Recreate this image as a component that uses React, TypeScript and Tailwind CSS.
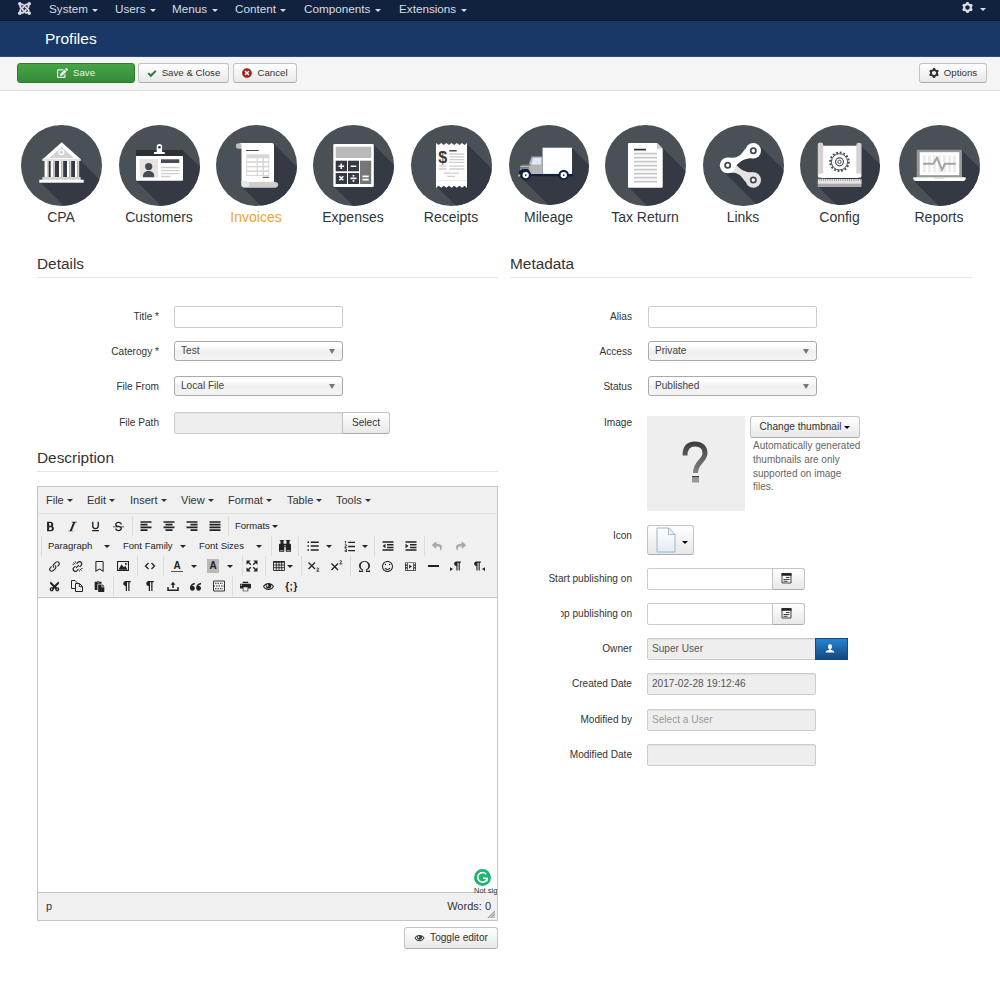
import React from 'react';
import {
  ImBinoculars, ImBold, ImCheckmark, ImCog, ImEye, ImFilm, ImItalic, ImJoomla, ImLink, ImListNumbered,
  ImOmega, ImPilcrow, ImPrinter, ImQuotesLeft, ImSmile, ImStrikethrough, ImUnderline, ImUser,
} from 'react-icons/im';
import { FaPaste, FaEdit, FaTimesCircle, FaRegBookmark, FaShare, FaReply, FaCut } from 'react-icons/fa';

type Kids = { children?: React.ReactNode };

function Caret({ className = '' }: { className?: string }) {
  return (
    <svg viewBox="0 0 6 3" className={`h-[3px] w-[6px] shrink-0 fill-current ${className}`}>
      <path d="M0 0h6L3 3z" />
    </svg>
  );
}

const NAV = [
  { label: 'System', w: 'w-[66px]' },
  { label: 'Users', w: 'w-[57px]' },
  { label: 'Menus', w: 'w-[63px]' },
  { label: 'Content', w: 'w-[69px]' },
  { label: 'Components', w: 'w-[95px]' },
  { label: 'Extensions', w: 'w-[80px]' },
];

function NavBar() {
  return (
    <header className="flex h-[21px] items-start border-b border-[#0b1a31] bg-[#10223e] text-[#d9dde3]">
      <ImJoomla className="mt-[2px] ml-[17.500px] h-[13px] w-[13px]" />
      <nav className="ml-[18.500px] flex text-[11.7px] leading-[17px]">
        {NAV.map((n) => (
          <span key={n.label} className={`flex items-center ${n.w}`}>
            {n.label}
            <Caret className="mt-[3px] ml-[4.500px]" />
          </span>
        ))}
      </nav>
      <span className="mt-[2px] mr-[14px] ml-auto flex items-center">
        <ImCog className="h-[11px] w-[11px]" />
        <Caret className="mt-[3px] ml-[7px]" />
      </span>
    </header>
  );
}

function Btn({ className = '', children }: Kids & { className?: string }) {
  return (
    <button
      className={`flex shrink-0 items-center justify-center rounded-[3px] border border-[#c3c3c3] border-b-[#adadad] bg-linear-to-b from-white to-[#e8e8e8] whitespace-nowrap text-[#333] ${className}`}
    >
      {children}
    </button>
  );
}

function ActionBar() {
  return (
    <div className="flex h-[34px] items-start border-b border-[#e1e1e1] bg-[#f5f5f5] pt-[6px] text-[9.7px]">
      <button className="ml-[17px] flex h-[20px] w-[118px] items-center justify-center rounded-[3px] border border-[#2f7d33] bg-linear-to-b from-[#46a546] to-[#368a38] text-[#e6f3e6]">
        <FaEdit className="mr-[5px] h-[10px] w-[11px]" />
        Save
      </button>
      <Btn className="ml-[3px] h-[20px] w-[91px]">
        <ImCheckmark className="mr-[5px] h-[9px] w-[10px] text-[#2d7d31]" />
        Save &amp; Close
      </Btn>
      <Btn className="ml-[4px] h-[20px] w-[64px]">
        <FaTimesCircle className="mr-[5px] h-[10px] w-[10px] text-[#a51f18]" />
        Cancel
      </Btn>
      <Btn className="mr-[13px] ml-auto h-[20px] w-[68px]">
        <ImCog className="mr-[5px] h-[10px] w-[10px]" />
        Options
      </Btn>
    </div>
  );
}

/* ---------- round section icons, each on an 81-unit canvas ---------- */

function Shadow({ a, b }: { a: [number, number]; b: [number, number] }) {
  return (
    <polygon
      fill="#343943"
      points={`${a[0]},${a[1]} ${a[0] + 60},${a[1] + 60} ${b[0] + 60},${b[1] + 60} ${b[0]},${b[1]}`}
    />
  );
}

const cpa = (
  <>
    <Shadow a={[59, 35]} b={[19, 57]} />
    <rect x="23" y="35" width="35" height="18" fill="#343943" />
    <path d="M40.7 17.3 60 34.5H21.3z" fill="#fff" />
    <path d="M40.7 22 53 33H28.500z" fill="#d3d1d2" />
    <circle cx="40.4" cy="27.300" r="2.400" fill="#d3d1d2" stroke="#fff" strokeWidth="1.200" />
    <rect x="21.300" y="33.800" width="38.400" height="2.200" fill="#e3e1e2" />
    {[23.5, 29.7, 38, 46, 54].map((x) => (
      <g key={x}>
        <rect x={x} y="36" width="2.500" height="16" fill="#fff" />
        <rect x={x + 2.5} y="36" width="1.700" height="16" fill="#d3d1d2" />
      </g>
    ))}
    <rect x="21.300" y="52" width="38.400" height="3" fill="#d3d1d2" />
    <rect x="18.300" y="54.700" width="44.400" height="3" fill="#fff" />
  </>
);

const customers = (
  <>
    <Shadow a={[64, 25]} b={[17, 55.7]} />
    <rect x="17" y="25" width="47" height="6.500" fill="#2c3135" />
    <path d="M37.700 27v-5.300a2.700 2.700 0 0 1 5.400 0V27h2.600v2H35v-2z" fill="#fff" />
    <circle cx="40.400" cy="22.300" r="1.300" fill="#343943" />
    <rect x="17" y="31" width="47" height="24.700" rx="0.800" fill="#fff" />
    <rect x="20.700" y="34" width="18.300" height="18.300" fill="#e6e3e4" />
    <circle cx="29.700" cy="41.600" r="3.600" fill="#444b55" />
    <path d="M24 52.300v-1.500c0-3 2.500-4.800 5.700-4.800s5.500 1.800 5.500 4.800v1.500z" fill="#444b55" />
    <rect x="42" y="34.300" width="18.300" height="3.700" fill="#444b55" />
    <path d="M42 42.500h18.300M42 45.700h18.300M42 48.700h18.300M42 51.500h9.500" stroke="#cfcdce" strokeWidth="1.300" />
  </>
);

const invoices = (
  <>
    <Shadow a={[57, 18]} b={[26, 62]} />
    <path d="M27 18.300h-4.500a2.700 2.700 0 0 0 0 5.400H27z" fill="#bfbdbe" />
    <path d="M24 18H56a2 2 0 0 1 2 2v38H25.500V20z" fill="#fff" />
    <path d="M30 25.500h12.700M46.700 52.300h6.500" stroke="#444b55" strokeWidth="1" />
    <rect x="30.300" y="29.300" width="23" height="21.700" fill="#d8d6d7" />
    {[33.2, 37.8, 42.4, 47].map((y) => (
      <g key={y} fill="#fff">
        <rect x="31.200" y={y} width="9.500" height="3" />
        <rect x="42" y={y} width="4.500" height="3" />
        <rect x="48" y={y} width="4.300" height="3" />
      </g>
    ))}
    <path d="M27 57h33a2.900 2.900 0 0 1-1 5.700H28a2.900 2.900 0 0 1-2.600-3V56z" fill="#d0cecf" />
    <path d="M25.500 56h5a3 3 0 0 1-.5 6h-2a2.700 2.700 0 0 1-2.500-3z" fill="#e9e8e8" />
  </>
);

const expenses = (
  <>
    <Shadow a={[60.5, 19.5]} b={[21, 61.5]} />
    <rect x="20.300" y="19" width="40.500" height="43" rx="1.300" fill="#fff" />
    <rect x="22.700" y="21.700" width="35.600" height="11.300" fill="#b9b9b9" />
    <g fill="#343943">
      <rect x="22.700" y="35.700" width="11.300" height="10.600" />
      <rect x="35" y="35.700" width="11" height="10.600" />
      <rect x="22.700" y="48" width="11.300" height="11" />
      <rect x="35" y="48" width="11" height="11" />
    </g>
    <rect x="47" y="35.700" width="11.200" height="23.300" fill="#767676" />
    <path
      d="M25.500 41.200h5.600M28.300 38.400V44M37.700 41.200h5.600M26.300 51.300l4 4M30.300 51.300l-4 4M37.500 53.400h6M49.500 51.400h6.200M49.500 54.600h6.200"
      stroke="#fff"
      strokeWidth="1.600"
    />
    <circle cx="40.500" cy="50.700" r="1" fill="#fff" />
    <circle cx="40.500" cy="56.100" r="1" fill="#fff" />
  </>
);

const receipts = (
  <>
    <Shadow a={[56, 19]} b={[25, 61]} />
    <path
      d="M25 18l2.600 2 2.600-2 2.600 2 2.600-2 2.600 2 2.600-2 2.600 2 2.600-2 2.600 2 2.600-2 2.600 2L56 18v45l-2.400-2.200-2.600 2-2.600-2-2.600 2-2.600-2-2.600 2-2.600-2-2.600 2-2.600-2-2.600 2-2.600-2L25 63z"
      fill="#fff"
    />
    <text x="31.800" y="38" textAnchor="middle" fontFamily="Liberation Sans" fontSize="16" fontWeight="bold" fill="#343943">$</text>
    <path d="M38.300 25.700h7.400" stroke="#444b55" strokeWidth="1.600" />
    <path
      d="M38.300 29h15M38.300 31.800h15M38.300 34.600h15M38.300 37.400h15M38.300 41.200h15M38.300 44h15M28 41.200h7.500M28 44h7.500M32.700 48.200h15.500M36.500 51.300h7.500"
      stroke="#cfcdce"
      strokeWidth="1.300"
    />
    <path d="M26 55.500h30" stroke="#d5d5d5" strokeWidth="0.800" strokeDasharray="1.500 1" />
  </>
);

const mileage = (
  <>
    <Shadow a={[63.5, 23]} b={[12, 53]} />
    <rect x="34" y="23" width="29.800" height="26.500" fill="#fff" />
    <path d="M23 32h9.500l1.500 1v17H12l-1-4 .5-5 2-1h6.500z" fill="#b4b3b5" />
    <path d="M24.500 33.500h8V40h-10z" fill="#dfe8f6" />
    <path d="M11 43.500h9M12 40.500h9.500" stroke="#343943" strokeWidth="0.800" />
    <path d="M10 46.500l3.500-2 6 0 3 5H65V52H21l-9 1.500-2-2z" fill="#10223e" />
    <path d="M9.500 50h2v2.200h-2z" fill="#e5cf2c" />
    {[16.9, 55.4].map((x) => (
      <g key={x}>
        <circle cx={x} cy="50.700" r="5.300" fill="#10223e" />
        <circle cx={x} cy="50.700" r="3.200" fill="#fff" />
        <circle cx={x} cy="50.700" r="0.900" fill="#10223e" />
      </g>
    ))}
  </>
);

const taxReturn = (
  <>
    <Shadow a={[57.5, 23]} b={[24, 62.5]} />
    <path d="M24 18h28l5.700 5.700v38a1 1 0 0 1-1 1H24a1 1 0 0 1-1-1V19a1 1 0 0 1 1-1z" fill="#fff" />
    <path d="M52 18l5.700 5.700H52z" fill="#cfcdce" />
    <path d="M29 24.700h12" stroke="#343943" strokeWidth="1.800" />
    <path
      d="M29 28.700h23M29 32.700h23M29 36.700h23M29 40.700h23M29 44.700h23M29 48.700h23M29 52.700h23M29 56.700h23"
      stroke="#c9c7c8"
      strokeWidth="1.700"
    />
  </>
);

const links = (
  <>
    <Shadow a={[56, 20]} b={[19, 45]} />
    <path d="M26 48c8-1 11 1 16.500 9l8-9.700c-8 .2-12-1.500-18-8z" fill="#e6e3e4" />
    <path d="M26 32.500c8 1 11-1 16.500-9l8 9.700c-8-.2-12 1.500-18 8z" fill="#fff" />
    <circle cx="50.300" cy="55" r="7.700" fill="#e6e3e4" />
    <circle cx="50.300" cy="25.700" r="7.700" fill="#fff" />
    <circle cx="24.700" cy="40.300" r="7.900" fill="#fff" />
    {[[50.3, 55], [50.3, 25.7], [24.7, 40.3]].map(([x, y]) => (
      <circle key={y} cx={x} cy={y} r="2.600" fill="#fff" stroke="#444b55" strokeWidth="1.800" />
    ))}
  </>
);

const config = (
  <>
    <Shadow a={[62, 21]} b={[18, 62]} />
    <rect x="22" y="21" width="37" height="32.500" fill="#fff" />
    <path d="M18 20a2.500 2 0 0 1 5.500 0v30h-5.500zM57 20a2.500 2 0 0 1 5.300 0v30H57z" fill="#d3d1d2" />
    <rect x="18" y="49" width="44.300" height="4.500" rx="2.200" fill="#fff" />
    <rect x="18" y="54.700" width="44.300" height="5" fill="#e6e3e4" />
    <path d="M19 55.700h42.500" stroke="#8b8b8b" strokeWidth="1.800" strokeDasharray="0.700 1.500" />
    <rect x="18" y="59.500" width="44.300" height="3.300" fill="#a9a7a8" />
    <circle cx="40" cy="37.300" r="9.400" fill="none" stroke="#444b55" strokeWidth="2" strokeDasharray="1.850 1.840" />
    <circle cx="40" cy="37.300" r="8.200" fill="#fff" stroke="#444b55" strokeWidth="1" />
    <circle cx="40" cy="37.300" r="4" fill="none" stroke="#444b55" strokeWidth="1.200" />
    <circle cx="40" cy="37.300" r="1.700" fill="none" stroke="#444b55" strokeWidth="1" />
  </>
);

const reports = (
  <>
    <Shadow a={[62.5, 25]} b={[15, 56]} />
    <rect x="17.700" y="24.700" width="45.300" height="28" rx="1.300" fill="#979797" />
    <rect x="20.700" y="27.200" width="39.600" height="23" fill="#fff" />
    <path d="M25.500 30.500v17M30.500 30.500v17M35.500 30.500v17M40.500 30.500v17M45.500 30.500v17M50.500 30.500v17M55.500 30.500v17" stroke="#ececec" strokeWidth="2.800" />
    <path d="M24 38.800h10.500l3.500-6 5 12 3-6h10.700" fill="none" stroke="#a3a3a3" strokeWidth="2" />
    <path d="M14.300 52.300h52.400v1.200c0 1.500-1 2.500-2.500 2.500H16.800c-1.500 0-2.500-1-2.500-2.500z" fill="#fff" />
    <rect x="35.500" y="52.300" width="10" height="1.300" fill="#cfcdce" />
  </>
);

const SECTIONS = [
  { label: 'CPA', art: cpa, box: 'ml-[21px] w-[81px]' },
  { label: 'Customers', art: customers, box: 'ml-[17px] w-[81px]' },
  { label: 'Invoices', art: invoices, box: 'ml-[16px] w-[81px]', active: true },
  { label: 'Expenses', art: expenses, box: 'ml-[16px] w-[81px]' },
  { label: 'Receipts', art: receipts, box: 'ml-[17px] w-[81px]' },
  { label: 'Mileage', art: mileage, box: 'ml-[17px] w-[80px]' },
  { label: 'Tax Return', art: taxReturn, box: 'ml-[16px] w-[81px]' },
  { label: 'Links', art: links, box: 'ml-[17px] w-[81px]' },
  { label: 'Config', art: config, box: 'ml-[16px] w-[80px]' },
  { label: 'Reports', art: reports, box: 'ml-[19px] w-[81px]' },
];

function SectionIcons() {
  return (
    <div className="flex h-[163px] pt-[34px]">
      {SECTIONS.map((s) => (
        <a key={s.label} className={`flex shrink-0 flex-col items-center ${s.box}`}>
          <span className="h-[81px] w-full">
            <svg viewBox="0 0 81 81" className="aspect-square w-full rounded-full bg-[#495157]">
              {s.art}
            </svg>
          </span>
          <span
            className={`-mt-px mr-px flex h-[24px] items-center text-[14px] whitespace-nowrap ${s.active ? 'text-[#f5a32c]' : 'text-[#30343c]'}`}
          >
            {s.label}
          </span>
        </a>
      ))}
    </div>
  );
}

/* ---------- form pieces ---------- */

function Heading({ children }: Kids) {
  return <h2 className="h-[24px] border-b border-[#e5e5e5] text-[15.4px] leading-[20px] text-[#333]">{children}</h2>;
}

type RowProps = Kids & { label: string; className?: string; clip?: string; gap?: string };

function Row({ label, className = '', clip = '', gap = 'ml-[16px]', children }: RowProps) {
  return (
    <div className={`flex items-start ${className}`}>
      <div className="flex h-[21px] w-[122px] shrink-0 items-center justify-end">
        <span className={`flex justify-end whitespace-nowrap ${clip}`}>{label}</span>
      </div>
      <div className={`flex h-full ${gap}`}>{children}</div>
    </div>
  );
}

function Field({ className = '', children }: Kids & { className?: string }) {
  return <div className={`flex items-center border border-[#ccc] pl-[4px] ${className}`}>{children}</div>;
}

const textBox = 'h-full w-[169px] rounded-[2px] bg-white';
const lockedBox = 'h-full w-[169px] rounded-[2px] bg-[#eee] text-[#555] shadow-[inset_0_1px_1px_#e2e2e2]';

function Select({ value }: { value: string }) {
  return (
    <div className="flex h-[20px] w-[169px] items-center justify-between rounded-[3px] border border-[#aaa] bg-linear-to-b from-white from-20% via-[#f0f0f0] via-50% to-[#f4f4f4] pr-[7px] pl-[6px] text-[#444]">
      {value}
      <svg viewBox="0 0 6 5" className="h-[5px] w-[6px] fill-[#777]">
        <path d="M0 0h6L3 5z" />
      </svg>
    </div>
  );
}

/* ---------- editor ---------- */

const MENUS = [
  { label: 'File', w: 'w-[41px]' },
  { label: 'Edit', w: 'w-[43px]' },
  { label: 'Insert', w: 'w-[51px]' },
  { label: 'View', w: 'w-[47px]' },
  { label: 'Format', w: 'w-[59px]' },
  { label: 'Table', w: 'w-[49px]' },
  { label: 'Tools', w: 'w-[45px]' },
];

const ALIGN_PATHS = [
  'M.5 2h11M.5 4.700h7M.5 7.400h11M.5 10.100h7',
  'M.5 2h11M2.500 4.700h7M.5 7.400h11M2.500 10.100h7',
  'M.5 2h11M4.500 4.700h7M.5 7.400h11M4.500 10.100h7',
  'M.5 2h11M.5 4.700h11M.5 7.400h11M.5 10.100h11',
];

function Cell({ w = 'w-[23px]', children }: Kids & { w?: string }) {
  return <span className={`flex h-full shrink-0 items-center justify-center ${w}`}>{children}</span>;
}

function Sep({ className = '' }: { className?: string }) {
  return (
    <span className={`flex h-full w-[4px] shrink-0 justify-center ${className}`}>
      <span className="h-full w-px bg-[#dcdcdc]" />
    </span>
  );
}

function Drop({ w, label }: { w: string; label: string }) {
  return (
    <span className={`flex h-full shrink-0 items-center justify-between whitespace-nowrap ${w}`}>
      {label}
      <Caret />
    </span>
  );
}

function Glyph({ className = 'h-[12px] w-[12px]', children }: Kids & { className?: string }) {
  return (
    <svg viewBox="0 0 12 12" className={className} fill="none" stroke="currentColor">
      {children}
    </svg>
  );
}

function Editor() {
  const i = 'h-[12px] w-[12px]';
  const s = 'h-[11px] w-[11px]';
  return (
    <div className="relative mt-[13px] flex h-[435px] w-[461px] flex-col border border-[#c5c5c5] bg-[#f0f0f0] text-[#333]">
      <div className="flex h-[27px] items-center border-b border-[#e2e2e2] pl-[8px] text-[11px]">
        {MENUS.map((m) => (
          <span key={m.label} className={`flex items-center ${m.w}`}>
            {m.label}
            <Caret className="ml-[3px]" />
          </span>
        ))}
      </div>
      <div className="flex h-[84px] flex-col border-b border-[#c5c5c5] pt-[2px] text-[9.500px] text-[#222]">
        <div className="flex h-[20px] items-center pl-px">
          <Cell w="w-[22px]"><ImBold className={s} /></Cell>
          <Cell><ImItalic className={s} /></Cell>
          <Cell><ImUnderline className={s} /></Cell>
          <Cell><ImStrikethrough className={s} /></Cell>
          <Sep />
          {ALIGN_PATHS.map((d) => (
            <Cell key={d}>
              <Glyph><path strokeWidth="1.700" d={d} /></Glyph>
            </Cell>
          ))}
          <Sep />
          <Drop w="ml-[5px] w-[43px]" label="Formats" />
        </div>
        <div className="flex h-[20px] items-center pl-px">
          <Sep />
          <Drop w="w-[72px] pr-[5px] pl-[5px]" label="Paragraph" />
          <Drop w="w-[76px] pr-[5px] pl-[8px]" label="Font Family" />
          <Drop w="w-[78px] pr-[7px] pl-[8px]" label="Font Sizes" />
          <Sep />
          <Cell><ImBinoculars className={i} /></Cell>
          <Sep />
          <Cell w="w-[26px]">
            <Glyph><path strokeWidth="1.500" d="M.5 2.300H2M3.700 2.300h8M.5 6.100H2M3.700 6.100h8M.5 9.900H2M3.700 9.900h8" /></Glyph>
          </Cell>
          <Caret className="mr-[4px]" />
          <Cell w="w-[26px]"><ImListNumbered className={s} /></Cell>
          <Caret className="mr-[4px]" />
          <Sep />
          <Cell>
            <Glyph>
              <path strokeWidth="1.500" d="M.5 2h11M5 4.700h6.500M5 7.400h6.500M.5 10.100h11" />
              <path stroke="none" fill="currentColor" d="M3.500 3.800v4.400L.5 6z" />
            </Glyph>
          </Cell>
          <Cell>
            <Glyph>
              <path strokeWidth="1.500" d="M.5 2h11M5 4.700h6.500M5 7.400h6.500M.5 10.100h11" />
              <path stroke="none" fill="currentColor" d="M.5 3.800v4.400l3-2.200z" />
            </Glyph>
          </Cell>
          <Sep className="-mr-px" />
          <Cell w="w-[24px]"><FaReply className="h-[10px] w-[10px] text-[#a9a9a9]" /></Cell>
          <Cell><FaShare className="h-[10px] w-[10px] text-[#a9a9a9]" /></Cell>
        </div>
        <div className="flex h-[20px] items-center pl-[4px]">
          <Cell w="w-[24px]"><ImLink className={s} /></Cell>
          <Cell w="w-[22px]">
            <Glyph className={s}>
              <g transform="rotate(90 6 6)">
                <path strokeWidth="1.300" d="M5 3l1.500-1.600a2.300 2.300 0 0 1 3.500 3.300L8.300 6.500M7 9l-1.500 1.600A2.300 2.300 0 0 1 2 7.300l1.700-1.800M4.500 7.500l3-3" transform="rotate(-90 6 6)" />
              </g>
              <path strokeWidth="1" d="M1.500 1.500l2 2M8.500 8.500l2 2M3.700.5V2M.5 3.700H2M8.300 10v1.500M10 8.300h1.500" />
            </Glyph>
          </Cell>
          <Cell><FaRegBookmark className="h-[11px] w-[9px]" /></Cell>
          <Cell>
            <Glyph>
              <path strokeWidth="1.100" d="M.5 1.500h11v9H.5z" />
              <path stroke="none" fill="currentColor" d="M1.500 9.700l3-5.500 2.300 3 1.500-1.500 2.200 4zM8 3h1.800v1.800H8z" />
            </Glyph>
          </Cell>
          <Sep className="ml-px" />
          <Cell w="w-[22px]">
            <Glyph><path strokeWidth="1.300" d="M4.500 3L1.500 6l3 3M7.500 3l3 3-3 3" /></Glyph>
          </Cell>
          <Sep />
          <Cell w="w-[24px]">
            <span className="h-[12px] w-[12px] border-b border-[#555] text-center text-[10px] leading-[11px] font-bold">A</span>
          </Cell>
          <Caret className="mx-[2px]" />
          <Cell w="w-[28px]">
            <span className="h-[14px] w-[12px] bg-[#b9b9b9] text-center text-[10px] leading-[14px] font-bold">A</span>
          </Cell>
          <Caret />
          <Sep className="ml-[7px]" />
          <Cell w="w-[16px]">
            <Glyph>
              <path strokeWidth="1.400" d="M1.500 1.500l3.300 3.300M10.500 1.500L7.200 4.800M1.500 10.500l3.300-3.300M10.500 10.500L7.200 7.200" />
              <path stroke="none" fill="currentColor" d="M.5.500h4.200L.5 4.700zM11.500.500v4.200L7.300.500zM.5 11.500V7.300l4.200 4.200zM11.500 11.500H7.300l4.200-4.200z" />
            </Glyph>
          </Cell>
          <Sep className="ml-[3px]" />
          <Cell w="ml-[4px] w-[16px]">
            <Glyph>
              <path strokeWidth="0.900" d="M.5 1.500h11v9H.5zM.5 5h11M.5 7.700h11M3.300 2v8.500M6 2v8.500M8.700 2v8.500" />
              <path strokeWidth="1.500" d="M.5 2h11" />
            </Glyph>
          </Cell>
          <Caret />
          <Sep className="ml-[6px]" />
          <Cell w="w-[22px]">
            <Glyph>
              <path strokeWidth="1.300" d="M.5 2.500l6.500 6.500M7 2.500L.5 9" />
              <path strokeWidth="0.900" d="M8.700 8.300l1.400-.4.500.900L8.700 11.200h2.600" />
            </Glyph>
          </Cell>
          <Cell>
            <Glyph>
              <path strokeWidth="1.300" d="M.5 3.500L7 10M7 3.500L.5 10" />
              <path strokeWidth="0.900" d="M8.700 1l1.400-.4.500.900L8.700 3.900h2.600" />
            </Glyph>
          </Cell>
          <Sep />
          <Cell w="w-[24px]"><ImOmega className={s} /></Cell>
          <Cell><ImSmile className={s} /></Cell>
          <Cell><ImFilm className={s} /></Cell>
          <Cell><span className="h-[1.500px] w-[11px] bg-[#222]" /></Cell>
          <Cell w="w-[22px]">
            <svg viewBox="0 0 4 5" className="mt-[5px] h-[4px] w-[3px] fill-current"><path d="M0 0v5l4-2.500z" /></svg>
            <ImPilcrow className="h-[10px] w-[9px]" />
          </Cell>
          <Cell>
            <ImPilcrow className="h-[10px] w-[9px]" />
            <svg viewBox="0 0 4 5" className="mt-[5px] h-[4px] w-[3px] fill-current"><path d="M4 0v5L0 2.500z" /></svg>
          </Cell>
        </div>
        <div className="flex h-[20px] items-center pl-[4px]">
          <Cell w="w-[24px]"><FaCut className="h-[11px] w-[11px] -rotate-90" /></Cell>
          <Cell w="w-[22px]">
            <Glyph>
              <path strokeWidth="1" d="M4.500 8.500H.5v-8H4L6 2.500V4M4.500 3.500h4l3 3v5h-7zM8.300 3.700v3h3" />
            </Glyph>
          </Cell>
          <Cell><FaPaste className={s} /></Cell>
          <Sep />
          <Cell><ImPilcrow className="h-[10px] w-[10px]" /></Cell>
          <Cell><ImPilcrow className="h-[10px] w-[10px]" /></Cell>
          <Cell>
            <Glyph>
              <path strokeWidth="1.500" d="M1 7v3.300h10V7M6 8V4" />
              <path stroke="none" fill="currentColor" d="M3.500 4.800L6 1.800l2.500 3z" />
            </Glyph>
          </Cell>
          <Cell><ImQuotesLeft className={s} /></Cell>
          <Cell>
            <Glyph>
              <path strokeWidth="0.900" d="M.5 1h11v10H.5z" />
              <path strokeWidth="0.900" strokeDasharray="1.500 1" d="M2 3.300h8M.5 6h11M2 8.700h8" />
            </Glyph>
          </Cell>
          <Sep />
          <Cell><ImPrinter className={s} /></Cell>
          <Cell><ImEye className={s} /></Cell>
          <Cell><span className="text-[10px] font-bold tracking-[0.500px]">{'{;}'}</span></Cell>
        </div>
      </div>
      <div className="flex-1 bg-white" />
      <div className="flex h-[28px] items-center justify-between border-t border-[#c5c5c5] pr-[6px] pl-[8px] text-[11px]">
        <span>p</span>
        <span>Words: 0</span>
      </div>
      <svg viewBox="0 0 8 8" className="absolute right-[2px] bottom-[2px] h-[8px] w-[8px]">
        <path d="M8 0v8H0z" fill="#c4c4c4" />
        <path d="M8 1L1 8M8 4L4 8" stroke="#999" strokeWidth="0.800" />
      </svg>
      <div className="absolute right-0 bottom-[25px] flex w-[23px] flex-col overflow-hidden">
        <svg viewBox="0 0 17 17" className="h-[17px] w-[17px]">
          <circle cx="8.500" cy="8.500" r="8.500" fill="#1fb573" />
          <path d="M12.200 5.200a4.800 4.800 0 1 0 1 4.300M9 9.300h4v3" fill="none" stroke="#fff" strokeWidth="1.600" />
        </svg>
        <span className="text-[7.500px] leading-[9px] whitespace-nowrap text-[#333]">Not sig</span>
      </div>
    </div>
  );
}

function CalendarButton() {
  return (
    <Btn className="-ml-px h-full w-[33px] rounded-l-none pr-[4px]">
      <svg viewBox="0 0 11 12" className="mb-[2px] h-[12px] w-[11px]" fill="none" stroke="#444">
        <path d="M1 1.500h9v9.500H1z" />
        <path strokeWidth="2.500" stroke="#222" d="M.5 2.500h10" />
        <path d="M5 5.500h3.500M2.500 7.500h6M2.500 9.300h4" />
      </svg>
    </Btn>
  );
}

export default function App() {
  return (
    <div className="h-[1000px] w-[1000px] overflow-hidden bg-white font-['Liberation_Sans',Arial,sans-serif]">
      <NavBar />
      <div className="flex h-[36px] items-center border-b border-[#2c4a7c] bg-[#1a3867] pl-[45px] text-[15.500px] text-white">Profiles</div>
      <ActionBar />
      <SectionIcons />

      <main className="flex text-[10.100px] text-[#333]">
        <section className="ml-[37px] w-[461px]">
          <Heading>Details</Heading>
          <div className="pt-[28px]">
            <Row gap="ml-[15px]" label="Title *" className="h-[22px]"><Field className={textBox} /></Row>
            <Row gap="ml-[15px]" label="Caterogy *" className="mt-[13px] h-[20px]"><Select value="Test" /></Row>
            <Row gap="ml-[15px]" label="File From" className="mt-[15px] h-[20px]"><Select value="Local File" /></Row>
            <Row gap="ml-[15px]" label="File Path" className="mt-[16px] h-[22px]">
              <Field className={lockedBox} />
              <Btn className="-ml-px h-full w-[48px] rounded-l-none">Select</Btn>
            </Row>
          </div>
          <div className="mt-[14px]">
            <Heading>Description</Heading>
          </div>
          <div className="pt-px">
            <Editor />
          </div>
          <div className="mt-[6px] flex justify-end">
            <Btn className="h-[22px] w-[94px]">
              <ImEye className="mr-[5px] h-[10px] w-[11px]" />
              Toggle editor
            </Btn>
          </div>
        </section>

        <section className="ml-[12px] w-[462px]">
          <Heading>Metadata</Heading>
          <div className="pt-[28px]">
            <Row label="Alias" className="h-[22px]"><Field className={textBox} /></Row>
            <Row label="Access" className="mt-[13px] h-[20px]"><Select value="Private" /></Row>
            <Row label="Status" className="mt-[15px] h-[20px]"><Select value="Published" /></Row>
            <Row gap="ml-[15px]" label="Image" className="mt-[16px] h-[99px]">
              <div className="mt-[4px] flex">
                <div className="flex h-[95px] w-[98px] items-center justify-center bg-[#eee]">
                  <svg viewBox="0 0 26 42" className="mr-[2px] mb-[4px] h-[42px] w-[26px]">
                    <defs>
                      <linearGradient id="mark" gradientUnits="userSpaceOnUse" x1="0" y1="0" x2="0" y2="42">
                        <stop offset="0" stopColor="#3a3a3a" />
                        <stop offset="1" stopColor="#9a9a9a" />
                      </linearGradient>
                    </defs>
                    <path d="M3 14.500C3 6 7 3 13 3s10 3.500 10 9c0 8-9.500 9-9.500 20" fill="none" stroke="url(#mark)" strokeWidth="5" />
                    <path d="M10 35h7v6.500h-7z" fill="#999" />
                    <path d="M10 35h7v1.200h-7z" fill="#444" />
                  </svg>
                </div>
                <div className="ml-[5px] flex flex-col">
                  <Btn className="h-[22px] w-[110px]">
                    Change thumbnail
                    <Caret className="ml-[3px] text-black" />
                  </Btn>
                  <p className="mt-px ml-[3px] w-[110px] text-[10px] leading-[13.800px] text-[#666]">
                    Automatically generated thumbnails are only supported on image files.
                  </p>
                </div>
              </div>
            </Row>
            <Row gap="ml-[15px]" label="Icon" className="mt-[14px] h-[30px]">
              <Btn className="h-full w-[47px]">
                <svg viewBox="0 0 20 26" className="ml-[2px] h-[26px] w-[20px]">
                  <defs>
                    <linearGradient id="sheet" x1="0" y1="0" x2="0" y2="1">
                      <stop offset="0" stopColor="#fff" />
                      <stop offset="1" stopColor="#e0edf4" />
                    </linearGradient>
                  </defs>
                  <path d="M1 1h11.500L19 7.500V25H1z" fill="url(#sheet)" stroke="#9fb7c4" />
                  <path d="M12.500 1v6.500H19z" fill="#eef6fa" stroke="#9fb7c4" strokeWidth="0.900" />
                </svg>
                <Caret className="mt-[4px] ml-[6px] text-black" />
              </Btn>
            </Row>
            <Row gap="ml-[15px]" label="Start publishing on" className="mt-[13px] h-[22px]">
              <Field className="h-full w-[126px] rounded-l-[2px] bg-white" />
              <CalendarButton />
            </Row>
            <Row gap="ml-[15px]" label="Stop publishing on" clip="w-[71px] overflow-hidden" className="mt-[13px] h-[22px]">
              <Field className="h-full w-[126px] rounded-l-[2px] bg-white" />
              <CalendarButton />
            </Row>
            <Row gap="ml-[15px]" label="Owner" className="mt-[13px] h-[22px]">
              <Field className={lockedBox}>Super User</Field>
              <button className="-ml-px flex h-full w-[33px] items-center justify-center border border-[#15497f] bg-linear-to-b from-[#2384d3] to-[#15497c] pr-[4px] text-white">
                <ImUser className="mb-[2px] h-[10px] w-[10px]" />
              </button>
            </Row>
            <Row gap="ml-[15px]" label="Created Date" className="mt-[13px] h-[22px]"><Field className={lockedBox}>2017-02-28 19:12:46</Field></Row>
            <Row gap="ml-[15px]" label="Modified by" className="mt-[14px] h-[22px]">
              <Field className={lockedBox}><span className="text-[#999]">Select a User</span></Field>
            </Row>
            <Row gap="ml-[15px]" label="Modified Date" className="mt-[13px] h-[22px]"><Field className={lockedBox} /></Row>
          </div>
        </section>
      </main>
    </div>
  );
}
